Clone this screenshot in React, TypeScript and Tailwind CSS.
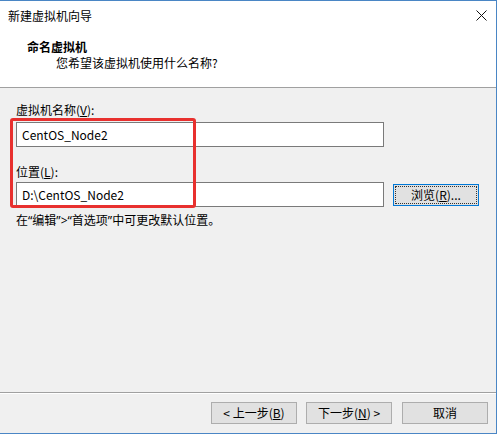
import React from "react";

const font = { fontFamily: '"Noto Sans CJK SC", "Noto Sans", sans-serif' };

function Q({ children }: { children: React.ReactNode }) {
  return <span style={{ fontFamily: '"Noto Sans", sans-serif' }}>{children}</span>;
}

function Btn({ children, w = "w-[86px]" }: { children: React.ReactNode; w?: string }) {
  return (
    <div
      className={`${w} h-[22px] border border-[#adadad] bg-[#e1e1e1] flex items-center justify-center text-[12px] leading-[16px] text-black`}
    >
      {children}
    </div>
  );
}

export default function App() {
  return (
    <div className="w-[499px] h-[434px] bg-white overflow-hidden relative" style={font}>
      <div className="w-[497px] h-[434px] flex flex-col border-t border-r border-b border-[#4a86c5] bg-[#f0f0f0]">
        {/* Title bar */}
        <div className="h-[29px] bg-white flex items-center justify-between pl-[8px] pr-[9px]">
          <span className="text-[12px] leading-[16px] text-black">新建虚拟机向导</span>
          <svg width="11" height="11" viewBox="0 0 11 11" className="block">
            <path d="M0.5 0.5 L10.5 10.5 M10.5 0.5 L0.5 10.5" stroke="#111" strokeWidth="1" fill="none" />
          </svg>
        </div>
        {/* Header */}
        <div className="h-[58px] bg-white border-b border-[#a0a0a0] pt-[9px]">
          <div className="pl-[27px] text-[12px] leading-[16px] font-bold text-black">命名虚拟机</div>
          <div className="pl-[56px] text-[12px] leading-[16px] text-black">您希望该虚拟机使用什么名称?</div>
        </div>
        {/* Body */}
        <div className="h-[304px] pl-[16px] pt-[14px] text-[12px] leading-[16px] text-black">
          <div>
            虚拟机名称(<span className="underline">V</span>):
          </div>
          <div className="mt-[4px] w-[368px] h-[25px] border border-[#7a7a7a] bg-white flex items-center pl-[5px]">
            CentOS_Node2
          </div>
          <div className="mt-[17px]">
            位置(<span className="underline">L</span>):
          </div>
          <div className="mt-[2px] flex items-center">
            <div className="w-[368px] h-[25px] border border-[#7a7a7a] bg-white flex items-center pl-[5px]">
              D:\CentOS_Node2
            </div>
            <div className="ml-[9px] w-[86px] h-[22px] border border-[#0078d7] bg-[#e1e1e1] p-[1px]">
              <div className="w-full h-full border border-dotted border-[#333] flex items-center justify-center">
                浏览(<span className="underline">R</span>)...
              </div>
            </div>
          </div>
          <div className="mt-[5px]">
            在<Q>“</Q>编辑<Q>”&gt;“</Q>首选项<Q>”</Q>中可更改默认位置。
          </div>
        </div>
        {/* Footer */}
        <div className="h-[41px] border-t border-[#a0a0a0]">
          <div className="h-[1px] bg-white" />
          <div className="pt-[8px] pr-[8px] flex justify-end">
            <Btn>
              &lt; 上一步(<span className="underline">B</span>)
            </Btn>
            <div className="ml-[9px]">
              <Btn>
                下一步(<span className="underline">N</span>) &gt;
              </Btn>
            </div>
            <div className="ml-[10px]">
              <Btn>取消</Btn>
            </div>
          </div>
        </div>
      </div>
      {/* Red annotation box */}
      <div className="absolute left-[10px] top-[118px] w-[186px] h-[90px] border-[3px] border-[#e8302e] rounded-[3px]" />
    </div>
  );
}
